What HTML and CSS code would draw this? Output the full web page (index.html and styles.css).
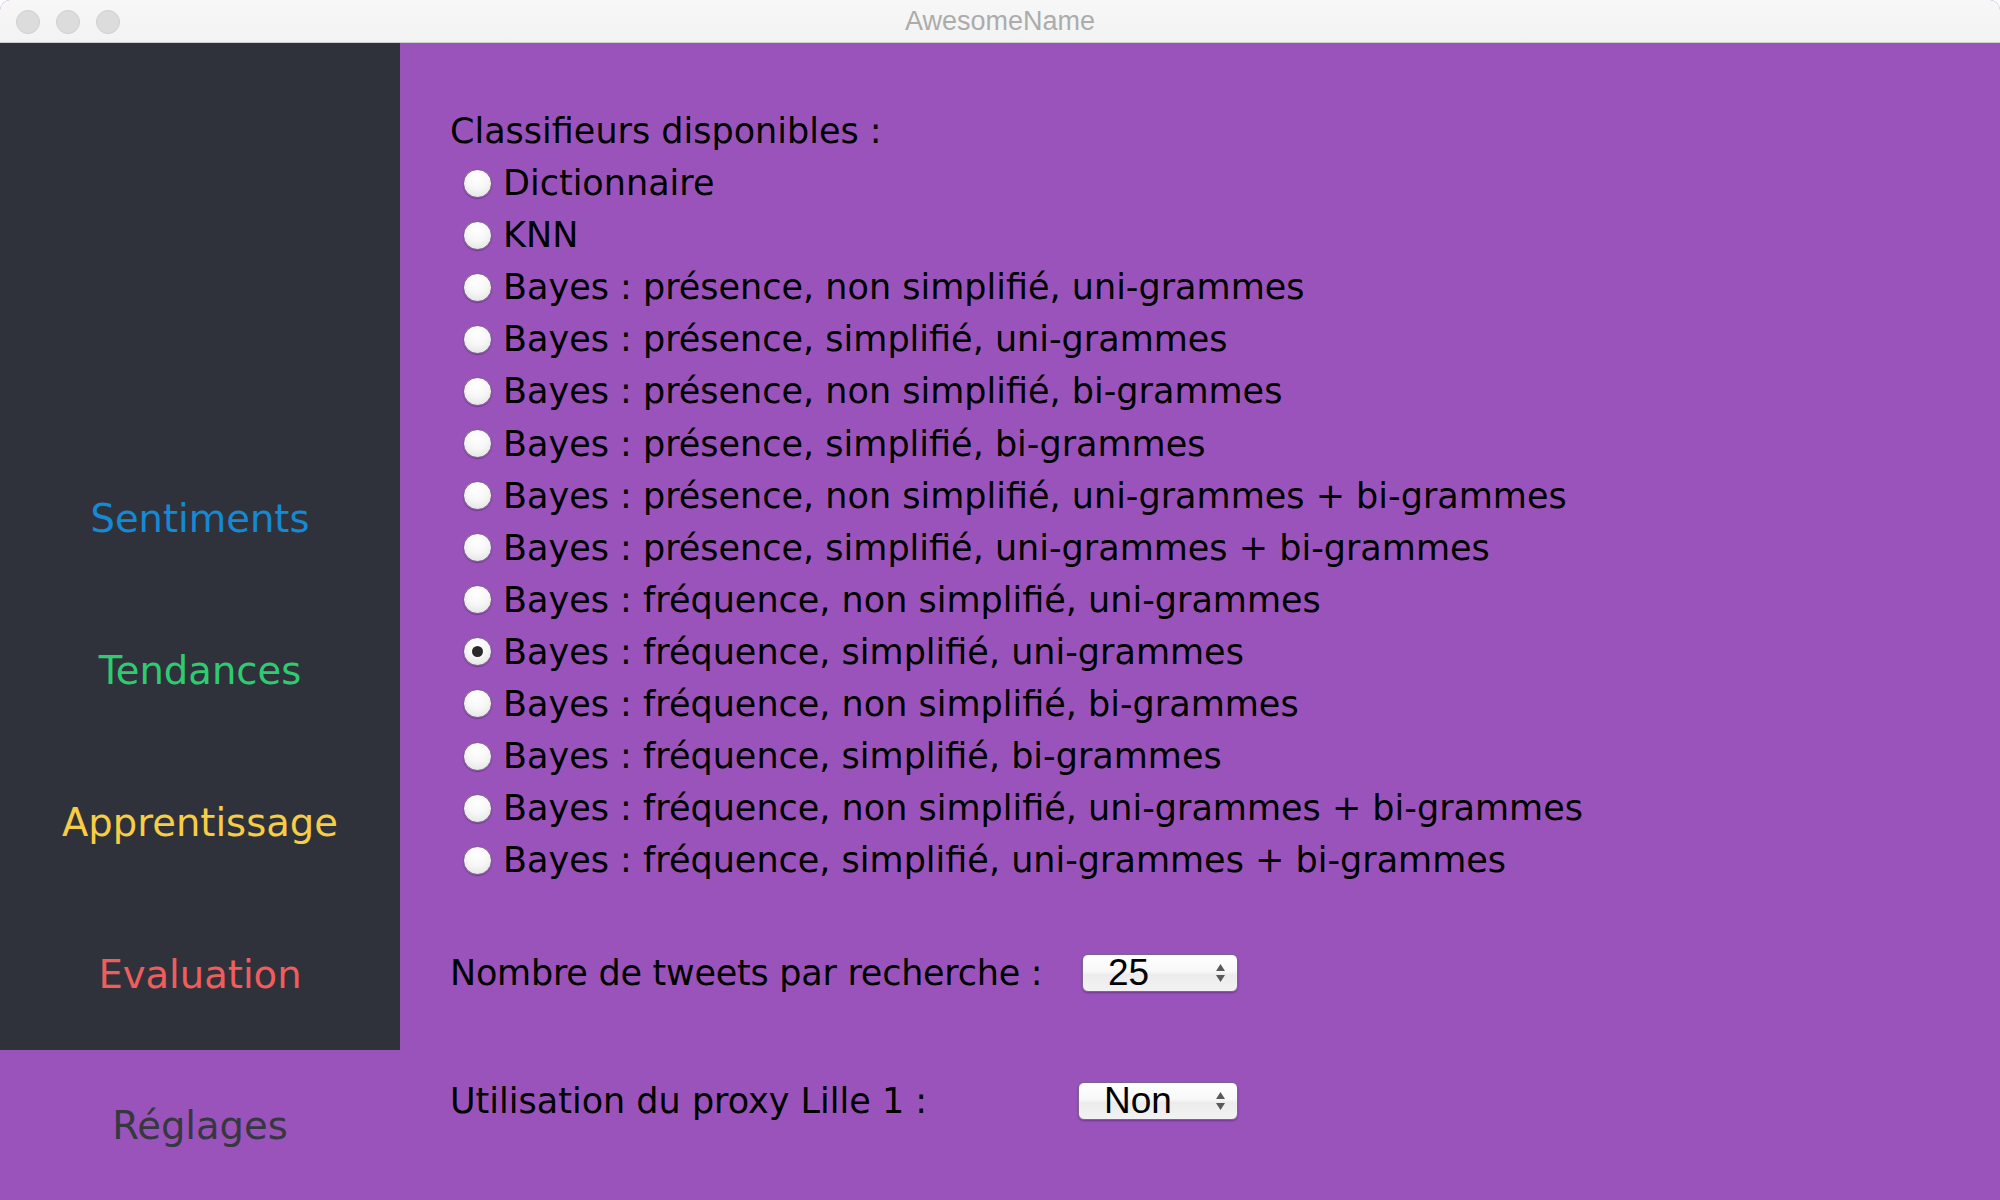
FILE: index.html
```html
<!DOCTYPE html>
<html lang="fr">
<head>
<meta charset="utf-8">
<title>AwesomeName</title>
<link rel="stylesheet" href="styles.css">
</head>
<body>
<div class="window">
  <div class="titlebar">
    <div class="lights">
      <span class="light"></span>
      <span class="light"></span>
      <span class="light"></span>
    </div>
    <div class="title">AwesomeName</div>
  </div>
  <div class="main">
    <nav class="sidebar">
      <div class="spacer"></div>
      <div class="nav-item sentiments">Sentiments</div>
      <div class="nav-item tendances">Tendances</div>
      <div class="nav-item apprentissage">Apprentissage</div>
      <div class="nav-item evaluation">Evaluation</div>
      <div class="nav-item reglages active">Réglages</div>
    </nav>
    <section class="content">
      <div class="heading">Classifieurs disponibles :</div>
      <ul class="radios">
        <li class="radio-row"><span class="radio"></span><span>Dictionnaire</span></li>
        <li class="radio-row"><span class="radio"></span><span>KNN</span></li>
        <li class="radio-row"><span class="radio"></span><span>Bayes : présence, non simplifié, uni-grammes</span></li>
        <li class="radio-row"><span class="radio"></span><span>Bayes : présence, simplifié, uni-grammes</span></li>
        <li class="radio-row"><span class="radio"></span><span>Bayes : présence, non simplifié, bi-grammes</span></li>
        <li class="radio-row"><span class="radio"></span><span>Bayes : présence, simplifié, bi-grammes</span></li>
        <li class="radio-row"><span class="radio"></span><span>Bayes : présence, non simplifié, uni-grammes + bi-grammes</span></li>
        <li class="radio-row"><span class="radio"></span><span>Bayes : présence, simplifié, uni-grammes + bi-grammes</span></li>
        <li class="radio-row"><span class="radio"></span><span>Bayes : fréquence, non simplifié, uni-grammes</span></li>
        <li class="radio-row"><span class="radio checked"></span><span>Bayes : fréquence, simplifié, uni-grammes</span></li>
        <li class="radio-row"><span class="radio"></span><span>Bayes : fréquence, non simplifié, bi-grammes</span></li>
        <li class="radio-row"><span class="radio"></span><span>Bayes : fréquence, simplifié, bi-grammes</span></li>
        <li class="radio-row"><span class="radio"></span><span>Bayes : fréquence, non simplifié, uni-grammes + bi-grammes</span></li>
        <li class="radio-row"><span class="radio"></span><span>Bayes : fréquence, simplifié, uni-grammes + bi-grammes</span></li>
      </ul>
      <div class="setting first">
        <span class="label narrow">Nombre de tweets par recherche :</span>
        <div class="select w156">
          <span class="value">25</span>
          <svg class="arrows" width="11" height="20" viewBox="0 0 11 20"><path d="M5.5 1 L10 8 H1 Z M5.5 19 L10 12 H1 Z" fill="#5a5a5a"/></svg>
        </div>
      </div>
      <div class="setting second">
        <span class="label">Utilisation du proxy Lille 1 :</span>
        <div class="select w160">
          <span class="value">Non</span>
          <svg class="arrows" width="11" height="20" viewBox="0 0 11 20"><path d="M5.5 1 L10 8 H1 Z M5.5 19 L10 12 H1 Z" fill="#5a5a5a"/></svg>
        </div>
      </div>
    </section>
  </div>
</div>
</body>
</html>
```
FILE: styles.css
```css
html, body {
  margin: 0;
  padding: 0;
  background: #ffffff;
}

.window {
  width: 2000px;
  height: 1200px;
  display: flex;
  flex-direction: column;
  overflow: hidden;
  border-radius: 10px 10px 0 0;
  background: #9b53bc;
}

.titlebar {
  height: 42px;
  flex: none;
  position: relative;
  background: linear-gradient(#f7f7f7, #f3f3f3);
  border-bottom: 1px solid #cdcdcd;
  display: flex;
  align-items: center;
  justify-content: center;
}

.lights {
  position: absolute;
  left: 16px;
  top: 10px;
  display: flex;
  gap: 16px;
}

.light {
  width: 22px;
  height: 22px;
  border-radius: 50%;
  background: #dcdcdc;
  border: 1px solid #cfcfcf;
}

.title {
  font-family: "Liberation Sans", Arial, sans-serif;
  font-size: 27px;
  color: #acacac;
  line-height: 46px;
}

.main {
  flex: 1;
  display: flex;
  min-height: 0;
}

.sidebar {
  width: 400px;
  flex: none;
  background: #30323b;
  display: flex;
  flex-direction: column;
}

.spacer {
  flex: 1;
}

.nav-item {
  height: 152px;
  flex: none;
  display: flex;
  align-items: center;
  justify-content: center;
  font-family: "DejaVu Sans", sans-serif;
  font-size: 38.5px;
}

.sentiments { color: #1589d3; }
.tendances { color: #2ecc71; }
.apprentissage { color: #f7cd45; }
.evaluation { color: #ef5d5d; }
.reglages { color: #363840; }

.nav-item.active {
  background: #9b53bc;
  height: 150px;
}

.content {
  flex: 1;
  padding: 62px 0 0 50px;
  font-family: "DejaVu Sans", sans-serif;
  font-size: 35px;
  color: #000000;
}

.heading {
  line-height: 52px;
}

.radios {
  list-style: none;
  margin: 0;
  padding: 0 0 0 13px;
}

.radio-row {
  height: 52.1px;
  display: flex;
  align-items: center;
  gap: 11px;
}

.radio {
  width: 29px;
  height: 29px;
  flex: none;
  box-sizing: border-box;
  border-radius: 50%;
  background: radial-gradient(circle at 50% 30%, #ffffff 0%, #f7f7f7 45%, #dedede 100%);
  border: 1px solid #7a5e8c;
  box-shadow: 0 1px 1px rgba(60, 20, 80, 0.4);
  position: relative;
}

.radio.checked::after {
  content: "";
  position: absolute;
  left: 50%;
  top: 50%;
  width: 11px;
  height: 11px;
  margin: -5.5px 0 0 -5.5px;
  border-radius: 50%;
  background: #2a2a2a;
}

.setting {
  display: flex;
  align-items: center;
  height: 52px;
  width: 788px;
}

.setting.first {
  margin-top: 61px;
}

.setting.second {
  margin-top: 76px;
}

.label {
  flex: 1;
}

.label.narrow {
  letter-spacing: -0.25px;
}

.select {
  height: 38px;
  box-sizing: border-box;
  border-radius: 6px;
  background: linear-gradient(#ffffff 0%, #f8f8f8 45%, #ececec 55%, #f2f2f2 100%);
  border: 1px solid #7f6290;
  box-shadow: 0 1px 2px rgba(50, 15, 70, 0.4);
  display: flex;
  align-items: center;
  padding: 0 11px 0 25px;
  font-family: "Liberation Sans", Arial, sans-serif;
  font-size: 37px;
  color: #000;
}

.w156 { width: 156px; }
.w160 { width: 160px; }

.value {
  flex: 1;
  line-height: 38px;
}

.arrows {
  flex: none;
}
```
